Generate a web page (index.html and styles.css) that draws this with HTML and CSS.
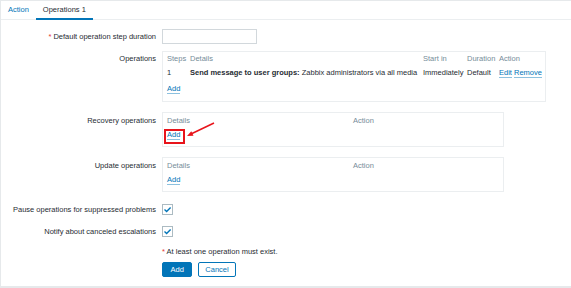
FILE: index.html
```html
<!DOCTYPE html>
<html lang="en">
<head>
  <meta charset="UTF-8" />
  <title>Action operations</title>
  <link rel="stylesheet" href="styles.css">
</head>
<body>
  <div class="page">
    <ul class="tabs">
      <li class="tab"><a href="#">Action</a></li>
      <li class="tab active">Operations 1</li>
    </ul>

    <form class="form">
      <div class="row row-duration">
        <label class="label"><span class="req">*</span> Default operation step duration</label>
        <input class="text-input" type="text">
      </div>

      <div class="row row-ops">
        <div class="label label-box">Operations</div>
        <div class="box box-wide">
          <table class="ops">
            <colgroup>
              <col style="width:23px"><col style="width:233px"><col style="width:44px"><col style="width:32px"><col>
            </colgroup>
            <tr class="head">
              <td>Steps</td><td>Details</td><td>Start in</td><td>Duration</td><td>Action</td>
            </tr>
            <tr class="data">
              <td>1</td>
              <td><b>Send message to user groups:</b> Zabbix administrators via all media</td>
              <td>Immediately</td>
              <td>Default</td>
              <td><a class="link" href="#">Edit</a> <a class="link" href="#">Remove</a></td>
            </tr>
          </table>
          <a class="link add" href="#">Add</a>
        </div>
      </div>

      <div class="row row-box">
        <div class="label label-box">Recovery operations</div>
        <div class="box box-narrow">
          <table class="ops">
            <colgroup><col style="width:186px"><col></colgroup>
            <tr class="head"><td>Details</td><td>Action</td></tr>
          </table>
          <span class="annot">
            <a class="link add" href="#">Add</a>
            <span class="mark"></span>
            <svg class="arrow" width="32" height="20" viewBox="0 0 32 20">
              <line x1="6.5" y1="12.8" x2="29" y2="2" stroke="#e8141b" stroke-width="1.5"/>
              <polygon points="2,15 8.5,14.7 6.3,10.2" fill="#e8141b"/>
            </svg>
          </span>
        </div>
      </div>

      <div class="row row-box row-update">
        <div class="label label-box">Update operations</div>
        <div class="box box-narrow">
          <table class="ops">
            <colgroup><col style="width:186px"><col></colgroup>
            <tr class="head"><td>Details</td><td>Action</td></tr>
          </table>
          <a class="link add" href="#">Add</a>
        </div>
      </div>

      <div class="row row-check row-pause">
        <div class="label">Pause operations for suppressed problems</div>
        <span class="checkbox">
          <svg width="9" height="9" viewBox="0 0 9 9"><path d="M1.5 4.6 L3.6 6.5 L7.6 2.4" fill="none" stroke="#0275b8" stroke-width="1.4"/></svg>
        </span>
      </div>

      <div class="row row-check row-notify">
        <div class="label">Notify about canceled escalations</div>
        <span class="checkbox">
          <svg width="9" height="9" viewBox="0 0 9 9"><path d="M1.5 4.6 L3.6 6.5 L7.6 2.4" fill="none" stroke="#0275b8" stroke-width="1.4"/></svg>
        </span>
      </div>

      <div class="row row-msg">
        <div class="label"></div>
        <div class="msg"><span class="req">*</span> At least one operation must exist.</div>
      </div>

      <div class="row row-buttons">
        <div class="label"></div>
        <div class="buttons">
          <button type="button" class="btn btn-primary">Add</button>
          <button type="button" class="btn btn-alt">Cancel</button>
        </div>
      </div>
    </form>
  </div>
</body>
</html>
```

FILE: styles.css
```css
* {
  box-sizing: border-box;
}
body {
  margin: 0;
  background: #e6e9eb;
  font-family: "Liberation Sans", Arial, sans-serif;
  font-size: 7.5px;
  color: #1f2c33;
}
.page {
  margin: 1px 0 0 1px;
  height: 285px;
  background: #fff;
}

/* tabs */
.tabs {
  display: flex;
  margin: 0;
  padding: 0;
  list-style: none;
  border-bottom: 1px solid #ebeef0;
}
.tab {
  padding: 0 7px;
  line-height: 17px;
  border-bottom: 2px solid transparent;
  margin-bottom: -1px;
}
.tab a {
  color: #0275b8;
  text-decoration: none;
}
.tab.active {
  border-bottom-color: #0275b8;
}

/* form */
.form {
  padding-top: 9px;
}
.row {
  display: flex;
  align-items: flex-start;
}
.label {
  width: 161px;
  flex: none;
  padding-right: 6px;
  text-align: right;
  line-height: 9px;
}
.req {
  color: #e33734;
}
.row-duration {
  margin-bottom: 7px;
}
.row-duration .label {
  line-height: 15px;
}
.text-input {
  width: 95px;
  height: 15px;
  border: 1px solid #d2d8dc;
  margin: 0;
  padding: 0 3px;
  font: inherit;
}

.box {
  border: 1px solid #ebeef0;
  padding: 3px 4px 6px;
}
.box-wide {
  width: 384px;
  padding: 2px 2px 7px 4px;
}
.box-narrow {
  width: 342px;
}
.label-box {
  padding-top: 3px;
}
.row-ops {
  margin-bottom: 10px;
}
.row-box .label-box {
  padding-top: 4px;
}
.row-box {
  margin-bottom: 10px;
}
.row-update {
  margin-bottom: 12px;
}

.ops {
  width: 100%;
  table-layout: fixed;
  border-collapse: collapse;
}
.ops td {
  padding: 0;
  line-height: 9px;
  white-space: nowrap;
  vertical-align: top;
}
.ops .head td {
  color: #768d99;
}
.ops .data td {
  padding: 5px 0;
}

.link {
  color: #0275b8;
  text-decoration: none;
  border-bottom: 1px solid rgba(2, 117, 184, 0.45);
}
.add {
  display: inline-block;
  line-height: 8px;
  margin-top: 6px;
}
.box-wide .add {
  margin-top: 3px;
}

.annot {
  position: relative;
  display: inline-block;
}
.mark {
  position: absolute;
  left: -3px;
  top: 4px;
  width: 21px;
  height: 15px;
  border: 2px solid #e8141b;
}
.arrow {
  position: absolute;
  left: 18px;
  top: -4px;
}

/* checkboxes */
.row-check .label {
  line-height: 11px;
}
.row-pause {
  margin-bottom: 11px;
}
.row-notify {
  margin-bottom: 10px;
}
.checkbox {
  width: 11px;
  height: 11px;
  border: 1px solid #acbbc2;
  display: flex;
  align-items: center;
  justify-content: center;
}

.row-msg {
  margin-bottom: 6px;
}
.msg {
  line-height: 9px;
}

/* buttons */
.buttons {
  display: flex;
  gap: 6px;
}
.btn {
  height: 15px;
  padding: 0 7.5px;
  font: inherit;
  border: 1px solid #0275b8;
  border-radius: 2px;
  line-height: 13px;
}
.btn-primary {
  background: #0275b8;
  color: #fff;
}
.btn-alt {
  background: #fff;
  color: #0275b8;
  padding: 0 6px;
}
```
